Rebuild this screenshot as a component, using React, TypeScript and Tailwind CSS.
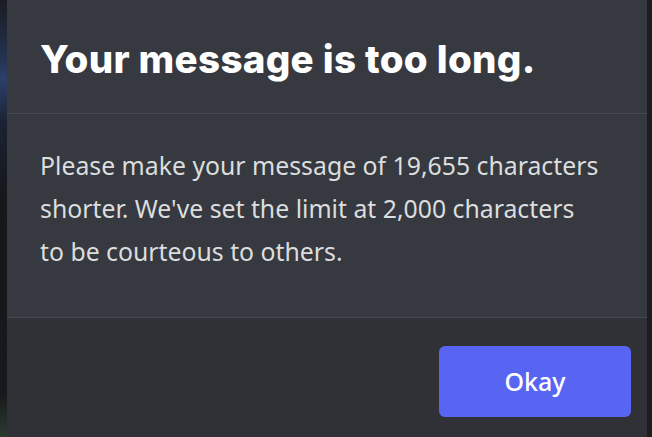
export default function App() {
  return (
    <div className="flex h-[437px] w-[652px] overflow-hidden bg-[#1b1c1f]">
      {/* backdrop peeking in on the left */}
      <div className="w-[7px] shrink-0 bg-[linear-gradient(180deg,#1a1c22_0%,#22304a_12%,#2c3f6a_18%,#1b2233_28%,#15171b_45%,#17181b_90%,#2a3a30_100%)]" />

      <div className="flex flex-1 flex-col bg-[#36393f]">
        <header className="h-[114px] shrink-0 border-b border-[#464950] px-[33px] pt-[35px]">
          <h1 className="text-[38.5px] font-extrabold leading-[48px] tracking-[0.3px] text-white [font-family:Inter,'Noto_Sans',sans-serif]">
            Your message is too long.
          </h1>
        </header>

        <section className="h-[204px] shrink-0 border-b border-[#464950] px-[33px] pt-[30px]">
          <p className="text-[24.8px] leading-[43px] text-[#dcddde] [font-family:'Noto_Sans',sans-serif]">
            Please make your message of 19,655 characters
            <br />
            shorter. We've set the limit at 2,000 characters
            <br />
            to be courteous to others.
          </p>
        </section>

        <footer className="flex flex-1 justify-end bg-[#2f3136] pr-[16px] pt-[28px]">
          <button className="h-[71px] w-[192px] rounded-[6px] bg-[#5865f2] text-[25px] font-medium text-white [font-family:'Noto_Sans',sans-serif]">
            Okay
          </button>
        </footer>
      </div>

      <div className="w-[5px] shrink-0 bg-[#1b1c1f]" />
    </div>
  );
}
